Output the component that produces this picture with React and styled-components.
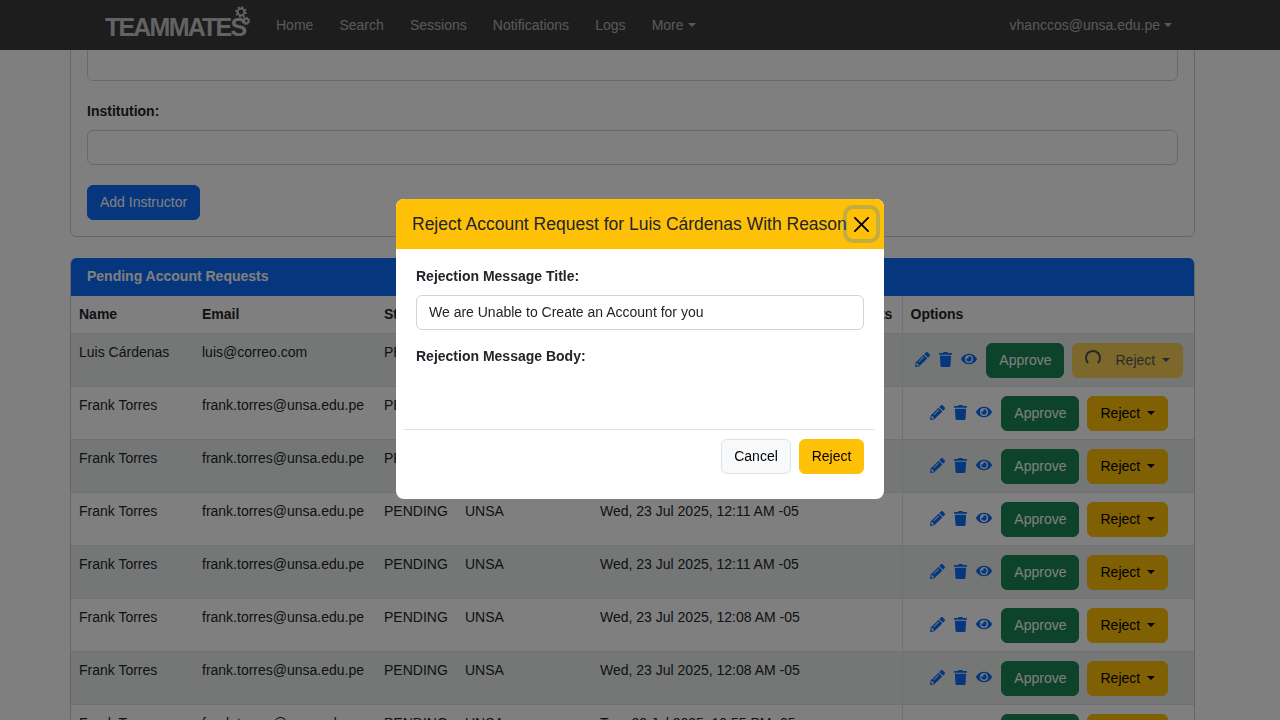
import React from 'react';
import styled, { createGlobalStyle } from 'styled-components';
import { FaPencilAlt, FaTrash, FaEye } from 'react-icons/fa';

const GlobalStyle = createGlobalStyle`
  html, body {
    margin: 0;
    height: 100%;
    overflow: hidden;
    background: #fff;
    font-family: "Liberation Sans", Arial, sans-serif;
    font-size: 14px;
    line-height: 1.5;
    color: #212529;
  }
  * { box-sizing: border-box; }
`;

const Shell = styled.div`
  height: 720px;
  display: flex;
  flex-direction: column;
  overflow: hidden;
`;

const Navbar = styled.nav`
  flex: none;
  height: 50px;
  background: #3a3a3a;
  display: flex;
  align-items: center;
  padding: 0 108px 0 105px;
`;

const Logo = styled.div`
  display: flex;
  align-items: flex-start;
  width: 171px;
  height: 50px;
  color: #c6c6c6;
`;

const LogoText = styled.span`
  font-size: 25px;
  font-weight: 700;
  letter-spacing: -1.8px;
  line-height: 25px;
  margin-top: 15px;
`;

const Gears = styled.svg`
  width: 16px;
  height: 20px;
  margin: 6px 0 0 -10px;
`;

const NavLinks = styled.div`
  display: flex;
  gap: 26.1px;
  flex: 1;
`;

const NavLink = styled.span`
  color: rgba(255, 255, 255, 0.62);
  display: inline-flex;
  align-items: center;
`;

const Caret = styled.i`
  display: inline-block;
  margin-left: ${(p) => p.$gap || 4}px;
  border-top: 4px solid currentColor;
  border-left: 4px solid transparent;
  border-right: 4px solid transparent;
`;

const Content = styled.main`
  flex: 1;
  padding: 0 85px 0 70px;
  min-height: 0;
  overflow: hidden;
`;

const FormCard = styled.section`
  margin-top: -5px;
  height: 192px;
  border: 1px solid rgba(0, 0, 0, 0.2);
  border-radius: 6px;
  padding: 0 16px;
`;

const Input = styled.div`
  height: 35px;
  border: 1px solid #ced4da;
  border-radius: 6px;
  background: #fff;
  padding: 6px 12px;
`;

const FieldLabel = styled.div`
  font-weight: 700;
  margin: 20px 0 8px;
  line-height: 21px;
`;

const Button = styled.button`
  height: 35px;
  padding: 6px 12px;
  font: inherit;
  border-radius: 6px;
  border: 1px solid ${(p) => p.$border || p.$bg};
  background: ${(p) => p.$bg};
  color: ${(p) => p.$color || '#000'};
  display: inline-flex;
  align-items: center;
  justify-content: center;
  white-space: nowrap;
  ${(p) => p.$width && `width: ${p.$width}px;`}
  ${(p) => p.$dim && 'opacity: 0.65;'}
`;

const AddButton = styled(Button)`
  margin-top: 20px;
`;

const TableCard = styled.section`
  margin-top: 21px;
  border: 1px solid rgba(0, 0, 0, 0.2);
  border-top: 0;
  border-radius: 6px;
  overflow: hidden;
`;

const CardHeader = styled.div`
  height: 38px;
  background: #0d6efd;
  color: #fff;
  font-weight: 700;
  padding: 0 16px 2px;
  display: flex;
  align-items: center;
`;

const Table = styled.table`
  width: 100%;
  border-collapse: collapse;
  table-layout: fixed;
`;

const Th = styled.th`
  text-align: left;
  height: 37px;
  padding: 0 8px;
  border-bottom: 1px solid #dee2e6;
  ${(p) => p.$options && 'border-left: 1px solid #dee2e6;'}
  white-space: nowrap;
`;

const Tr = styled.tr`
  background: ${(p) => (p.$striped ? '#ebeeee' : 'transparent')};
`;

const Td = styled.td`
  height: 53px;
  padding: 8px;
  vertical-align: top;
  border-bottom: 1px solid #dee2e6;
  white-space: nowrap;
`;

const OptionsCell = styled(Td)`
  border-left: 1px solid #dee2e6;
  padding: 9px 0 8px 2px;
`;

const Options = styled.div`
  display: flex;
  justify-content: center;
  align-items: center;
  gap: 8px;
`;

const IconLink = styled.span`
  display: inline-flex;
  color: #0d6efd;
`;

const Icons = styled.div`
  display: flex;
  align-items: center;
  gap: 8px;
  margin: -2px 1px 0 0;
`;

const Spinner = styled.i`
  width: 16px;
  height: 16px;
  margin: -4px 14px 0 0;
  border: 2px solid currentColor;
  border-bottom-color: transparent;
  border-radius: 50%;
`;

const Backdrop = styled.div`
  position: fixed;
  inset: 0;
  background: rgba(0, 0, 0, 0.5);
`;

const Modal = styled.div`
  position: fixed;
  left: 396px;
  top: 199px;
  width: 488px;
  height: 300px;
  background: #fff;
  border-radius: 8px;
  overflow: hidden;
  display: flex;
  flex-direction: column;
`;

const ModalHeader = styled.header`
  flex: none;
  height: 50px;
  background: #ffc107;
  display: flex;
  align-items: center;
  padding: 0 8px 0 16px;
`;

const ModalTitle = styled.h5`
  margin: 0;
  flex: 1;
  font-size: 17.5px;
  font-weight: 400;
  white-space: nowrap;
`;

const CloseButton = styled.button`
  width: 30px;
  height: 30px;
  padding: 0;
  background: transparent;
  border: 0;
  border-radius: 6px;
  box-shadow: 0 0 0 4px rgba(13, 110, 253, 0.25);
  display: flex;
  align-items: center;
  justify-content: center;
  color: #000;
`;

const ModalBody = styled.div`
  flex: 1;
  padding: 0 20px;
`;

const ModalLabel = styled.div`
  font-weight: 700;
  line-height: 21px;
  margin: ${(p) => p.$top}px 0 8px;
`;

const ModalFooter = styled.footer`
  margin: 0 9px 25px 8px;
  border-top: 1px solid #dee2e6;
  padding: 9px 11px 0;
  display: flex;
  justify-content: flex-end;
  gap: 8px;
`;

const rows = [
  ['Luis Cárdenas', 'luis@correo.com', ''],
  ['Frank Torres', 'frank.torres@unsa.edu.pe', ''],
  ['Frank Torres', 'frank.torres@unsa.edu.pe', ''],
  ['Frank Torres', 'frank.torres@unsa.edu.pe', 'Wed, 23 Jul 2025, 12:11 AM -05'],
  ['Frank Torres', 'frank.torres@unsa.edu.pe', 'Wed, 23 Jul 2025, 12:11 AM -05'],
  ['Frank Torres', 'frank.torres@unsa.edu.pe', 'Wed, 23 Jul 2025, 12:08 AM -05'],
  ['Frank Torres', 'frank.torres@unsa.edu.pe', 'Wed, 23 Jul 2025, 12:08 AM -05'],
  ['Frank Torres', 'frank.torres@unsa.edu.pe', 'Tue, 22 Jul 2025, 10:55 PM -05'],
];

function App() {
  return (
    <Shell>
      <GlobalStyle />
      <Navbar>
        <Logo>
          <LogoText>TEAMMATES</LogoText>
          <Gears viewBox="0 0 16 20">
            <circle cx="6" cy="6" r="3.4" fill="none" stroke="#c6c6c6" strokeWidth="2" />
            <circle cx="6" cy="6" r="5" fill="none" stroke="#c6c6c6" strokeWidth="1.6" strokeDasharray="2 1.9" />
            <circle cx="11" cy="15" r="2.4" fill="none" stroke="#c6c6c6" strokeWidth="1.6" />
            <circle cx="11" cy="15" r="3.6" fill="none" stroke="#c6c6c6" strokeWidth="1.2" strokeDasharray="1.6 1.2" />
          </Gears>
        </Logo>
        <NavLinks>
          <NavLink>Home</NavLink>
          <NavLink>Search</NavLink>
          <NavLink>Sessions</NavLink>
          <NavLink>Notifications</NavLink>
          <NavLink>Logs</NavLink>
          <NavLink>More<Caret /></NavLink>
        </NavLinks>
        <NavLink>vhanccos@unsa.edu.pe<Caret /></NavLink>
      </Navbar>
      <Content>
        <FormCard>
          <Input />
          <FieldLabel>Institution:</FieldLabel>
          <Input />
          <AddButton $bg="#0d6efd" $color="#fff">Add Instructor</AddButton>
        </FormCard>
        <TableCard>
          <CardHeader>Pending Account Requests</CardHeader>
          <Table>
            <colgroup>
              <col style={{ width: 123 }} />
              <col style={{ width: 182 }} />
              <col style={{ width: 81 }} />
              <col style={{ width: 135 }} />
              <col style={{ width: 220 }} />
              <col style={{ width: 90 }} />
              <col />
            </colgroup>
            <thead>
              <tr>
                <Th>Name</Th>
                <Th>Email</Th>
                <Th>Status</Th>
                <Th>Institute</Th>
                <Th>Created At</Th>
                <Th>Comments</Th>
                <Th $options>Options</Th>
              </tr>
            </thead>
            <tbody>
              {rows.map((r, i) => (
                <Tr key={i} $striped={i % 2 === 0}>
                  <Td>{r[0]}</Td>
                  <Td>{r[1]}</Td>
                  <Td>PENDING</Td>
                  <Td>UNSA</Td>
                  <Td colSpan={2}>{r[2]}</Td>
                  <OptionsCell>
                    <Options>
                      <Icons>
                        <IconLink><FaPencilAlt size={15} /></IconLink>
                        <IconLink><FaTrash size={15} /></IconLink>
                        <IconLink><FaEye size={16} /></IconLink>
                      </Icons>
                      <Button $bg="#198754" $color="#fff">Approve</Button>
                      {i === 0 ? (
                        <Button $bg="#ffc107" $dim><Spinner />Reject<Caret $gap={7} /></Button>
                      ) : (
                        <Button $bg="#ffc107">Reject<Caret $gap={7} /></Button>
                      )}
                    </Options>
                  </OptionsCell>
                </Tr>
              ))}
            </tbody>
          </Table>
        </TableCard>
      </Content>
      <Backdrop />
      <Modal>
        <ModalHeader>
          <ModalTitle>Reject Account Request for Luis Cárdenas With Reason</ModalTitle>
          <CloseButton>
            <svg width="15" height="15" viewBox="0 0 16 16">
              <path d="M.293.293a1 1 0 0 1 1.414 0L8 6.586 14.293.293a1 1 0 1 1 1.414 1.414L9.414 8l6.293 6.293a1 1 0 0 1-1.414 1.414L8 9.414l-6.293 6.293a1 1 0 0 1-1.414-1.414L6.586 8 .293 1.707a1 1 0 0 1 0-1.414z" fill="#000" />
            </svg>
          </CloseButton>
        </ModalHeader>
        <ModalBody>
          <ModalLabel $top={17}>Rejection Message Title:</ModalLabel>
          <Input>We are Unable to Create an Account for you</Input>
          <ModalLabel $top={16}>Rejection Message Body:</ModalLabel>
        </ModalBody>
        <ModalFooter>
          <Button $bg="#f8f9fa" $border="#dee2e6" $width={70}>Cancel</Button>
          <Button $bg="#ffc107" $width={65}>Reject</Button>
        </ModalFooter>
      </Modal>
    </Shell>
  );
}

export default App;
